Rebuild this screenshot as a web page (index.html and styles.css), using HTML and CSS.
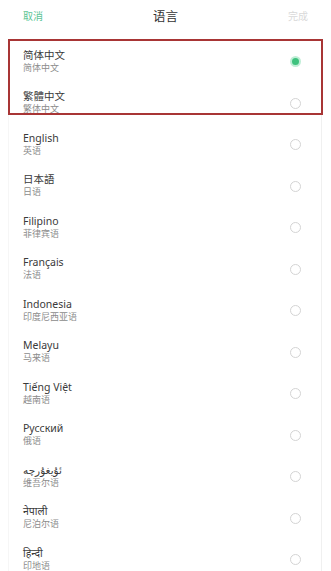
FILE: index.html
```html
<!DOCTYPE html>
<html lang="zh">
<head>
<meta charset="utf-8">
<link rel="stylesheet" href="styles.css">
</head>
<body>
<div class="screen">
  <header class="topbar">
    <span class="cancel">取消</span>
    <span class="title">语言</span>
    <span class="done">完成</span>
  </header>
  <div class="card">
    <ul class="list">
      <li class="row"><div class="txt"><div class="name">简体中文</div><div class="sub">简体中文</div></div><span class="radio on"></span></li>
      <li class="row"><div class="txt"><div class="name">繁體中文</div><div class="sub">繁体中文</div></div><span class="radio"></span></li>
      <li class="row"><div class="txt"><div class="name">English</div><div class="sub">英语</div></div><span class="radio"></span></li>
      <li class="row"><div class="txt"><div class="name">日本語</div><div class="sub">日语</div></div><span class="radio"></span></li>
      <li class="row"><div class="txt"><div class="name">Filipino</div><div class="sub">菲律宾语</div></div><span class="radio"></span></li>
      <li class="row"><div class="txt"><div class="name">Français</div><div class="sub">法语</div></div><span class="radio"></span></li>
      <li class="row"><div class="txt"><div class="name">Indonesia</div><div class="sub">印度尼西亚语</div></div><span class="radio"></span></li>
      <li class="row"><div class="txt"><div class="name">Melayu</div><div class="sub">马来语</div></div><span class="radio"></span></li>
      <li class="row"><div class="txt"><div class="name">Tiếng Việt</div><div class="sub">越南语</div></div><span class="radio"></span></li>
      <li class="row"><div class="txt"><div class="name">Русский</div><div class="sub">俄语</div></div><span class="radio"></span></li>
      <li class="row"><div class="txt"><div class="name" dir="rtl">ئۇيغۇرچە</div><div class="sub">维吾尔语</div></div><span class="radio"></span></li>
      <li class="row"><div class="txt"><div class="name">नेपाली</div><div class="sub">尼泊尔语</div></div><span class="radio"></span></li>
      <li class="row"><div class="txt"><div class="name">हिन्दी</div><div class="sub">印地语</div></div><span class="radio"></span></li>
    </ul>
  </div>
  <div class="highlight"></div>
</div>
</body>
</html>
```

FILE: styles.css
```css
* { box-sizing: border-box; margin: 0; padding: 0; }
html, body { width: 331px; height: 571px; overflow: hidden; background: #fff; }
body {
  font-family: "Noto Sans", "Noto Sans CJK SC", "DejaVu Sans", sans-serif;
  color: #333;
}
.screen { position: relative; width: 331px; height: 571px; overflow: hidden; }
.topbar {
  height: 34px;
  display: flex;
  align-items: center;
  justify-content: space-between;
  padding: 0 23px 4px 23px;
}
.cancel { font-size: 10px; color: #5cc495; width: 40px; }
.title { font-size: 12.5px; color: #333; }
.done { font-size: 10px; color: #d9d9d9; width: 40px; text-align: right; }
.card {
  margin: 6px 9px 0 8px;
  border-right: 1px solid #f0f0f0;
  border-left: 1px solid #f6f6f6;
}
.list { list-style: none; }
.row {
  height: 41.5px;
  display: flex;
  align-items: center;
  justify-content: space-between;
  padding: 0 20px 0 14px;
}
.txt { display: flex; flex-direction: column; align-items: flex-start; }
.name { font-size: 10.5px; line-height: 14px; color: #3a3a3a; }
.sub { font-size: 9px; line-height: 12.5px; color: #8c8c8c; }
.radio {
  width: 11px; height: 11px;
  border-radius: 50%;
  border: 1px solid #d4d4d4;
  margin-top: 2px;
}
.radio.on {
  border: 2px solid #bfeed6;
  background: #3ec27e;
}
.highlight {
  position: absolute;
  left: 8px; top: 39px;
  width: 315px; height: 76px;
  border: 2px solid #a83535;
  pointer-events: none;
}
```
